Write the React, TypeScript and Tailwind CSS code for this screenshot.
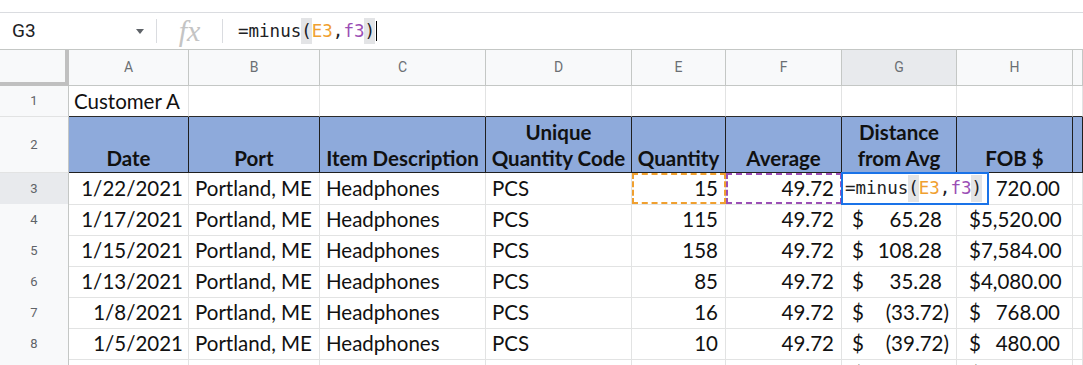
import React from 'react';

const ROW = 'grid grid-cols-[69px_120px_131px_166px_146px_94px_116px_115px_116px_1fr]';
const LETTERS = ['A', 'B', 'C', 'D', 'E', 'F', 'G', 'H', ''];

type DataRow = {
  n: number;
  date: string;
  qty: string;
  dist: string;
  fob: string;
};

const rows: DataRow[] = [
  { n: 3, date: '1/22/2021', qty: '15', dist: '', fob: '720.00' },
  { n: 4, date: '1/17/2021', qty: '115', dist: '65.28', fob: '5,520.00' },
  { n: 5, date: '1/15/2021', qty: '158', dist: '108.28', fob: '7,584.00' },
  { n: 6, date: '1/13/2021', qty: '85', dist: '35.28', fob: '4,080.00' },
  { n: 7, date: '1/8/2021', qty: '16', dist: '(33.72)', fob: '768.00' },
  { n: 8, date: '1/5/2021', qty: '10', dist: '(39.72)', fob: '480.00' },
  { n: 9, date: '1/4/2021', qty: '12', dist: '(37.72)', fob: '576.00' },
];

function Formula() {
  return (
    <>
      =minus<span className="bg-[#e3e4e6]">(</span>
      <span className="text-[#f0a030]">E3</span>,<span className="text-[#9b4fb5]">f3</span>
      <span className="bg-[#e3e4e6]">)</span>
    </>
  );
}

function FormulaBar() {
  return (
    <div className="h-[36px] flex items-center font-['Roboto',sans-serif]">
      <div className="w-[156px] flex items-center pl-[12px] pr-[12px] text-[19px] text-[#202124]">
        <span className="flex-1">G3</span>
        <span className="w-0 h-0 border-l-[4px] border-r-[4px] border-t-[5px] border-l-transparent border-r-transparent border-t-[#5f6368]" />
      </div>
      <div className="w-px h-[24px] bg-[#dadce0]" />
      <div className="w-[65px] flex justify-center">
        <span className="font-['Liberation_Serif',serif] italic text-[30px] leading-none text-[#c4c4c4]">fx</span>
      </div>
      <div className="w-px h-[24px] bg-[#dadce0]" />
      <div className="pl-[15px] flex items-center font-['DejaVu_Sans_Mono',monospace] text-[17.5px] text-[#202124]">
        <Formula />
        <span className="ml-[1px] w-px h-[20px] bg-black" />
      </div>
    </div>
  );
}

function RowHead({ n, selected }: { n: number; selected?: boolean }) {
  return (
    <div
      className={`flex items-center justify-center border-r border-b border-r-[#c4c7c5] border-b-[#e2e3e3] font-['Roboto',sans-serif] text-[13px] text-[#5f6368] ${
        selected ? 'bg-[#e8eaed]' : 'bg-[#f8f9fa]'
      }`}
    >
      {n}
    </div>
  );
}

const cell = 'border-r border-b border-[#e2e3e3] flex items-center whitespace-nowrap overflow-hidden';

function Accounting({ value, pad, hideSign }: { value: string; pad: string; hideSign?: boolean }) {
  const neg = value.startsWith('(');
  return (
    <div className={`${cell} justify-between ${pad}`}>
      <span>{hideSign ? '' : '$'}</span>
      <span className={neg ? '' : 'pr-[7px]'}>{value}</span>
    </div>
  );
}

export default function App() {
  return (
    <div className="w-[1083px] h-[365px] overflow-hidden bg-white text-[#111] font-['Lato',sans-serif] text-[20.5px]">
      <div className="h-[13px] border-b border-[#dadce0]" />
      <FormulaBar />

      {/* column letters */}
      <div className={`${ROW} h-[37px] border-t border-[#c4c7c5] font-['Roboto',sans-serif] text-[14px] text-[#6b6f73]`}>
        <div className="bg-[#f8f9fa] border-r-4 border-b-4 border-[#c0c0c0]" />
        {LETTERS.map((l) => (
          <div
            key={l || 'I'}
            className={`flex items-center justify-center border-r border-b border-[#c4c7c5] ${
              l === 'G' ? 'bg-[#e8eaed]' : 'bg-[#f8f9fa]'
            }`}
          >
            {l}
          </div>
        ))}
      </div>

      {/* row 1 */}
      <div className={`${ROW} h-[31px]`}>
        <RowHead n={1} />
        <div className={`${cell} border-b-[#2b2b2b] pl-[5px]`}>Customer A</div>
        {Array.from({ length: 8 }).map((_, i) => (
          <div key={i} className={`${cell} border-b-[#2b2b2b]`} />
        ))}
      </div>

      {/* row 2 header */}
      <div className={`${ROW} h-[56px]`}>
        <RowHead n={2} />
        {['Date', 'Port', 'Item Description', 'Unique\nQuantity Code', 'Quantity', 'Average', 'Distance\nfrom Avg', 'FOB $', ''].map(
          (h, i) => (
            <div
              key={i}
              className="bg-[#8eaadb] border-r border-b border-[#1f1f1f] flex items-end justify-center pb-[1px] font-bold text-center whitespace-pre leading-[26px]"
            >
              {h}
            </div>
          )
        )}
      </div>

      {rows.map((r) => (
        <div key={r.n} className={`${ROW} h-[31px]`}>
          <RowHead n={r.n} selected={r.n === 3} />
          <div className={`${cell} justify-end pr-[5px]`}>{r.date}</div>
          <div className={`${cell} pl-[6px]`}>Portland, ME</div>
          <div className={`${cell} pl-[6px]`}>Headphones</div>
          <div className={`${cell} pl-[6px]`}>PCS</div>
          <div className={`${cell} justify-end pr-[7px] relative overflow-visible`}>
            {r.qty}
            {r.n === 3 && (
              <div className="absolute left-0 right-[-1px] top-0 bottom-0 border-2 border-dashed border-[#f0a030]" />
            )}
          </div>
          <div className={`${cell} justify-end pr-[7px] relative overflow-visible`}>
            49.72
            {r.n === 3 && (
              <div className="absolute left-0 right-[-1px] top-0 bottom-0 border-2 border-dashed border-[#9b4fb5]" />
            )}
          </div>
          {r.n === 3 ? (
            <div className={`${cell} relative overflow-visible`}>
              <div className="absolute z-10 left-[-1px] top-[-1px] h-[33px] w-[148px] bg-white border-2 border-[#1a73e8] flex items-center pl-[2px] font-['DejaVu_Sans_Mono',monospace] text-[17.5px] text-[#202124]">
                <Formula />
              </div>
            </div>
          ) : (
            <Accounting value={r.dist} pad="pl-[10px] pr-[7px]" />
          )}
          <Accounting value={r.fob} pad="pl-[12px] pr-[5px]" hideSign={r.n === 3} />
          <div className={cell} />
        </div>
      ))}
    </div>
  );
}
